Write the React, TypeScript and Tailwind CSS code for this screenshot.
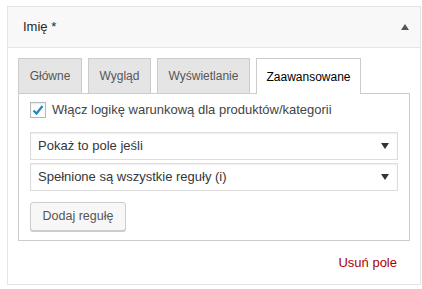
import React from "react";

const font = { fontFamily: '"Liberation Sans", Arial, sans-serif' };

export default function App() {
  return (
    <div className="w-[422px] h-[289px] bg-white pt-[6px] pl-[7px]" style={font}>
      <div className="w-[414px] h-[279px] border border-[#e5e5e5] bg-white flex flex-col">
        <div className="h-[41px] bg-[#f8f8f8] border-b border-[#e5e5e5] flex items-center justify-between pl-[15px] pr-[11px]">
          <span className="text-[13px] text-[#23282d]">Imię *</span>
          <svg width="8" height="6" viewBox="0 0 8 6"><path d="M0 6 L4 0 L8 6 Z" fill="#555" /></svg>
        </div>
        <div className="pl-[10px] pr-[10px] pt-[10px]">
          <div className="flex items-end gap-[6px] h-[35px]">
            <div className="h-[35px] w-[64px] bg-[#e5e5e5] border border-[#ccc] border-b-0 flex items-center justify-center text-[12px] text-[#555]">Główne</div>
            <div className="h-[35px] w-[63px] bg-[#e5e5e5] border border-[#ccc] border-b-0 flex items-center justify-center text-[12px] text-[#555]">Wygląd</div>
            <div className="h-[35px] w-[93px] bg-[#e5e5e5] border border-[#ccc] border-b-0 flex items-center justify-center text-[12px] text-[#555]">Wyświetlanie</div>
            <div className="h-[36px] w-[105px] bg-white border border-[#ccc] border-b-0 flex items-center justify-center text-[12px] text-[#000] relative top-[1px]">Zaawansowane</div>
          </div>
          <div className="border border-[#ccc] h-[148px] px-[11px] pt-[8px]">
            <div className="flex items-center gap-[6px] h-[16px]">
              <div className="w-[16px] h-[16px] border border-[#b4b9be] bg-white flex items-center justify-center shadow-[inset_0_1px_2px_rgba(0,0,0,0.1)]">
                <svg width="14" height="14" viewBox="0 0 14 14"><path d="M2.5 7.5 L5.5 10.5 L11.5 3" stroke="#1e8cbe" strokeWidth="2.2" fill="none" /></svg>
              </div>
              <span className="text-[13px] text-[#444]">Włącz logikę warunkową dla produktów/kategorii</span>
            </div>
            <div className="mt-[14px] flex flex-col gap-[3px]">
              <div className="h-[28px] border border-[#ddd] bg-white flex items-center justify-between pl-[7px] pr-[8px] shadow-[inset_0_1px_2px_rgba(0,0,0,0.07)]">
                <span className="text-[13px] text-[#32373c]">Pokaż to pole jeśli</span>
                <svg width="8" height="6" viewBox="0 0 8 6"><path d="M0 0 L8 0 L4 6 Z" fill="#333" /></svg>
              </div>
              <div className="h-[28px] border border-[#ddd] bg-white flex items-center justify-between pl-[7px] pr-[8px] shadow-[inset_0_1px_2px_rgba(0,0,0,0.07)]">
                <span className="text-[13px] text-[#32373c]">Spełnione są wszystkie reguły (i)</span>
                <svg width="8" height="6" viewBox="0 0 8 6"><path d="M0 0 L8 0 L4 6 Z" fill="#333" /></svg>
              </div>
            </div>
            <div className="mt-[11px] h-[29px] w-[96px] border border-[#ccc] rounded-[3px] bg-[#f7f7f7] shadow-[0_1px_0_#ccc] flex items-center justify-center text-[12.5px] text-[#555]">Dodaj regułę</div>
          </div>
        </div>
        <div className="flex justify-end pr-[23px] mt-[12px]">
          <span className="text-[13px] text-[#a00]">Usuń pole</span>
        </div>
      </div>
    </div>
  );
}
